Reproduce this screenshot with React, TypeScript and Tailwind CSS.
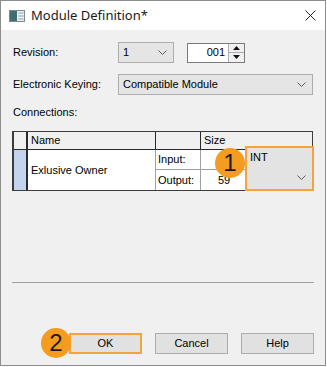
import React from "react";

function Chevron({ className = "" }: { className?: string }) {
  return (
    <svg width="9" height="5" viewBox="0 0 9 5" className={className}>
      <path d="M0.5 0.5 L4.5 4.5 L8.5 0.5" fill="none" stroke="#5a5a5a" strokeWidth="1" />
    </svg>
  );
}

function Badge({ n, className }: { n: string; className: string }) {
  return (
    <div
      className={
        "absolute flex h-[30px] w-[30px] items-center justify-center rounded-full bg-[#f39c1f] font-['Liberation_Sans',Arial,sans-serif] text-[24px] leading-none text-[#1a1a1a] " +
        className
      }
    >
      {n}
    </div>
  );
}

export default function App() {
  return (
    <div className="h-[367px] w-[327px] bg-white font-['Liberation_Sans',Arial,sans-serif] text-[11px] leading-[13px] text-black">
      <div className="flex h-[366px] w-[326px] flex-col border border-[#8c8c8c] bg-[#f0f0f0]">
        {/* title bar */}
        <div className="flex h-[29px] shrink-0 items-center bg-white pl-[8px] pr-[9px]">
          <svg width="16" height="12" viewBox="0 0 16 12">
            <rect x="0.5" y="0.5" width="15" height="11" fill="#e8eef2" stroke="#7d8a92" />
            <rect x="1" y="1" width="7" height="10" fill="#3f6f72" />
            <rect x="9.5" y="2.5" width="5" height="1" fill="#9aa6ad" />
            <rect x="9.5" y="5.5" width="5" height="1" fill="#9aa6ad" />
            <rect x="9.5" y="8.5" width="5" height="1" fill="#9aa6ad" />
          </svg>
          <div className="ml-[6px] font-['Noto_Sans',sans-serif] text-[13px] leading-none text-[#1a1a1a]">
            Module Definition*
          </div>
          <div className="flex-1" />
          <svg width="11" height="11" viewBox="0 0 11 11">
            <path d="M0.5 0.5 L10.5 10.5 M10.5 0.5 L0.5 10.5" stroke="#222" strokeWidth="1" />
          </svg>
        </div>

        <div className="flex flex-1 flex-col pl-[11px]">
          {/* revision */}
          <div className="mt-[12px] flex h-[21px] items-center">
            <div className="w-[106px] pl-[1px]">Revision:</div>
            <div className="flex h-[21px] w-[56px] items-center justify-between border border-[#adadad] bg-[#e5e5e5] pl-[4px] pr-[6px]">
              <span>1</span>
              <Chevron />
            </div>
            <div className="ml-[13px] flex h-[20px] items-center border border-[#7a7a7a] bg-white">
              <div className="w-[40px] pr-[3px] text-right">001</div>
              <div className="flex h-full w-[16px] flex-col border-l border-[#adadad] bg-[#f0f0f0]">
                <div className="flex flex-1 items-center justify-center border-b border-[#adadad]">
                  <svg width="7" height="4" viewBox="0 0 7 4">
                    <path d="M0 4 L3.5 0 L7 4 Z" fill="#111" />
                  </svg>
                </div>
                <div className="flex flex-1 items-center justify-center">
                  <svg width="7" height="4" viewBox="0 0 7 4">
                    <path d="M0 0 L3.5 4 L7 0 Z" fill="#111" />
                  </svg>
                </div>
              </div>
            </div>
          </div>

          {/* keying */}
          <div className="mt-[11px] flex h-[21px] items-center">
            <div className="w-[106px] pl-[1px]">Electronic Keying:</div>
            <div className="flex h-[21px] w-[195px] items-center justify-between border border-[#adadad] bg-[#e5e5e5] pl-[4px] pr-[6px]">
              <span>Compatible Module</span>
              <Chevron />
            </div>
          </div>

          <div className="mt-[11px] pl-[1px]">Connections:</div>

          {/* grid */}
          <div className="relative mt-[12px] w-[301px] border border-l-2 border-[#3c3c3c] bg-white">
            <div className="flex h-[18px] border-b border-[#2a2a2a] bg-[#f0f0f0]">
              <div className="w-[14px] border-r-2 border-[#2a2a2a]" />
              <div className="flex w-[128px] items-center border-r border-[#2a2a2a] pl-[3px]">Name</div>
              <div className="w-[45px] border-r border-[#2a2a2a]" />
              <div className="flex flex-1 items-center pl-[3px]">Size</div>
            </div>
            <div className="flex h-[40px]">
              <div className="w-[14px] border-r-2 border-[#2a2a2a] bg-[#c4d4ee]" />
              <div className="flex w-[128px] items-center border-r border-[#a0a0a0] pl-[3px]">
                Exlusive Owner
              </div>
              <div className="flex w-[45px] flex-col border-r border-[#a0a0a0]">
                <div className="flex h-[20px] items-center border-b border-[#a0a0a0] pl-[2px]">Input:</div>
                <div className="flex flex-1 items-center pl-[2px]">Output:</div>
              </div>
              <div className="flex w-[45px] flex-col border-r border-[#a0a0a0]">
                <div className="h-[20px] border-b border-[#a0a0a0]" />
                <div className="flex flex-1 items-center pl-[17px]">59</div>
              </div>
              <div className="flex-1" />
            </div>

            <div className="absolute left-[231px] top-[14px] flex h-[45px] w-[69px] flex-col justify-between border-2 border-[#f5a33b] bg-[#e3e3e3] pb-[9px] pl-[3px] pr-[6px] pt-[3px]">
              <span>INT</span>
              <Chevron className="self-end" />
            </div>
            <Badge n="1" className="left-[201px] top-[16px]" />
          </div>

          {/* separator */}
          <div className="mt-[91px] h-px w-[302px] bg-[#a0a0a0]" />

          {/* buttons */}
          <div className="relative mt-[50px] flex h-[21px] gap-[13px] pl-[57px]">
            <Badge n="2" className="left-[29px] top-[-5px]" />
            <div className="flex w-[73px] items-center justify-center border-2 border-[#f5a33b] bg-[#e1e1e1]">OK</div>
            <div className="flex w-[73px] items-center justify-center border border-[#adadad] bg-[#e1e1e1]">Cancel</div>
            <div className="flex w-[73px] items-center justify-center border border-[#adadad] bg-[#e1e1e1]">Help</div>
          </div>
        </div>
      </div>
    </div>
  );
}
